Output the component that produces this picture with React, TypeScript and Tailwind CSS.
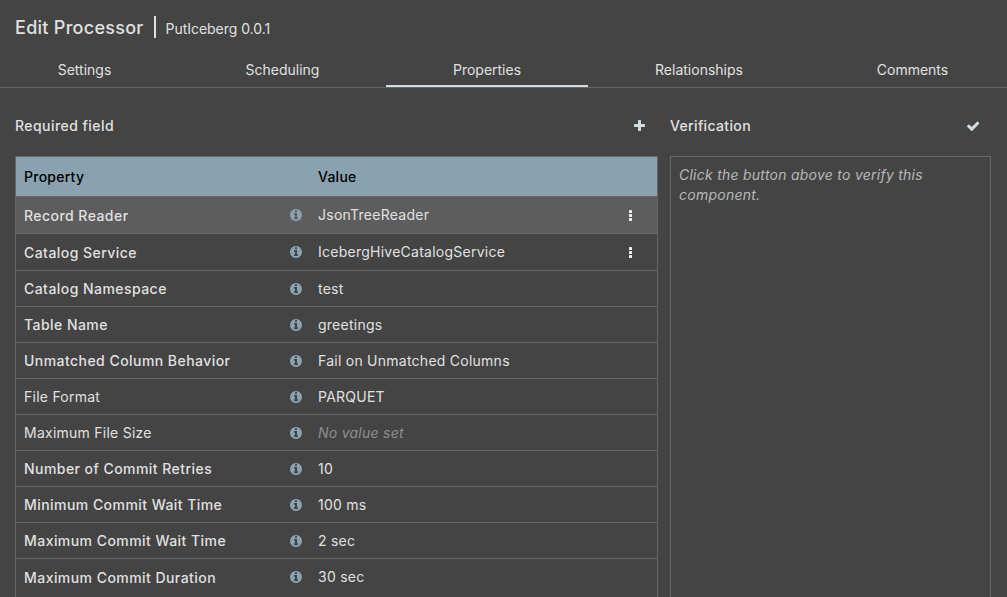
type Row = { name: string; value?: string; required?: boolean; menu?: boolean; height: string; valueShift?: string };

const rows: Row[] = [
  { name: "Record Reader", value: "JsonTreeReader", required: true, menu: true, height: "h-[37px] bg-[#5d5d5d]", valueShift: "pb-[1px]" },
  { name: "Catalog Service", value: "IcebergHiveCatalogService", required: true, menu: true, height: "h-[37px]", valueShift: "pb-[1px]" },
  { name: "Catalog Namespace", value: "test", required: true, height: "h-[36px]" },
  { name: "Table Name", value: "greetings", required: true, height: "h-[36px]" },
  { name: "Unmatched Column Behavior", value: "Fail on Unmatched Columns", required: true, height: "h-[36px]" },
  { name: "File Format", value: "PARQUET", height: "h-[36px]" },
  { name: "Maximum File Size", height: "h-[36px]" },
  { name: "Number of Commit Retries", value: "10", required: true, height: "h-[36px]" },
  { name: "Minimum Commit Wait Time", value: "100 ms", required: true, height: "h-[36px]" },
  { name: "Maximum Commit Wait Time", value: "2 sec", required: true, height: "h-[36px]" },
  { name: "Maximum Commit Duration", value: "30 sec", required: true, height: "h-[40px] pb-[3px]", valueShift: "pb-[1px]" },
];

const tabs = [
  { label: "Settings", width: "w-[169px]" },
  { label: "Scheduling", width: "w-[217px] pl-[10px]" },
  { label: "Properties", width: "w-[202px]" },
  { label: "Relationships", width: "w-[222px]" },
  { label: "Comments", width: "w-[197px] pl-[8px]" },
];

function InfoIcon() {
  return (
    <svg viewBox="128 128 1536 1536" className="size-[12px] shrink-0 fill-[#8aa2af]">
      <path d="M1152 1376v-160q0-14-9-23t-23-9h-96v-512q0-14-9-23t-23-9h-320q-14 0-23 9t-9 23v160q0 14 9 23t23 9h96v320h-96q-14 0-23 9t-9 23v160q0 14 9 23t23 9h448q14 0 23-9t9-23zm-128-896v-160q0-14-9-23t-23-9h-192q-14 0-23 9t-9 23v160q0 14 9 23t23 9h192q14 0 23-9t9-23zm640 416q0 209-103 385.5t-279.5 279.5-385.5 103-385.5-103-279.5-279.5-103-385.5 103-385.5 279.5-279.5 385.5-103 385.5 103 279.5 279.5 103 385.5z" />
    </svg>
  );
}

function PlusIcon() {
  return (
    <svg viewBox="192 128 1408 1408" className="size-[11px] fill-[#cfdde3]">
      <path d="M1600 736v192q0 40-28 68t-68 28h-416v416q0 40-28 68t-68 28h-192q-40 0-68-28t-28-68v-416h-416q-40 0-68-28t-28-68v-192q0-40 28-68t68-28h416v-416q0-40 28-68t68-28h192q40 0 68 28t28 68v416h416q40 0 68 28t28 68z" />
    </svg>
  );
}

function CheckIcon() {
  return (
    <svg viewBox="121 270 1550 1252" className="mt-[1px] h-[10px] w-[12.4px] fill-[#cfdde3]">
      <path d="M1671 566q0 40-28 68l-724 724-136 136q-28 28-68 28t-68-28l-136-136-362-362q-28-28-28-68t28-68l136-136q28-28 68-28t68 28l294 295 656-657q28-28 68-28t68 28l136 136q28 28 28 68z" />
    </svg>
  );
}

function MenuIcon() {
  return (
    <svg viewBox="0 0 3 11" className="mr-[25px] h-[11px] w-[3px] fill-[#eeeeee]">
      <rect width="3" height="3" rx="0.5" />
      <rect y="4" width="3" height="3" rx="0.5" />
      <rect y="8" width="3" height="3" rx="0.5" />
    </svg>
  );
}

export default function App() {
  return (
    <div className="flex h-[597px] w-[1007px] flex-col overflow-hidden bg-[#444444] font-['Inter',sans-serif] text-[14px] tracking-[0.25px] text-[#e0e0e0]">
      <header className="flex h-[53px] shrink-0 items-center pl-[15px] pt-[2px]">
        <h1 className="text-[18px] font-medium tracking-[0.28px]">Edit Processor</h1>
        <div className="mb-[2px] ml-[10px] h-[22px] w-[2px] bg-[#e0e0e0]" />
        <span className="ml-[10px] pt-[2px] tracking-[-0.04px]">PutIceberg 0.0.1</span>
      </header>
      <nav className="flex h-[35px] shrink-0 border-b border-[#666666] tracking-normal">
        {tabs.map((t) => (
          <div key={t.label} className={`flex h-[34px] items-center justify-center border-b-2 ${t.width} ${t.label === "Properties" ? "border-[#cfdde3]" : "border-transparent"}`}>
            {t.label}
          </div>
        ))}
      </nav>
      <main className="flex min-h-0 flex-1 gap-[12px] pl-[15px]">
        <section className="w-[643px]">
          <div className="flex h-[68px] items-center justify-between pr-[13px] pt-[7px]">
            <h2 className="pb-[1px] font-medium tracking-[0.45px]">Required field</h2>
            <PlusIcon />
          </div>
          <div className="border border-[#666666]">
            <div className="flex h-[40px] items-center border-b border-[#666666] bg-[#8aa2af] pl-[8px] font-medium text-black">
              <span className="w-[294px]">Property</span>
              <span>Value</span>
            </div>
            {rows.map((r) => (
              <div key={r.name} className={`flex items-center border-b border-[#666666] pl-[8px] ${r.height}`}>
                <span className={`w-[266px] ${r.required ? "font-medium tracking-[0.45px]" : ""}`}>{r.name}</span>
                <InfoIcon />
                <span className={`ml-[16px] flex-1 ${r.value ? "" : "italic text-[#8f8f8f]"} ${r.valueShift ?? ""}`}>{r.value ?? "No value set"}</span>
                {r.menu && <MenuIcon />}
              </div>
            ))}
          </div>
        </section>
        <section className="w-[321px]">
          <div className="flex h-[68px] items-center justify-between pr-[12px] pt-[7px]">
            <h2 className="pb-[1px] font-medium tracking-[0.35px]">Verification</h2>
            <CheckIcon />
          </div>
          <div className="h-[500px] border border-[#666666] px-[8px] pt-[8px] italic leading-[20px] text-[#b8b8b8]">
            Click the button above to verify this component.
          </div>
        </section>
      </main>
    </div>
  );
}
